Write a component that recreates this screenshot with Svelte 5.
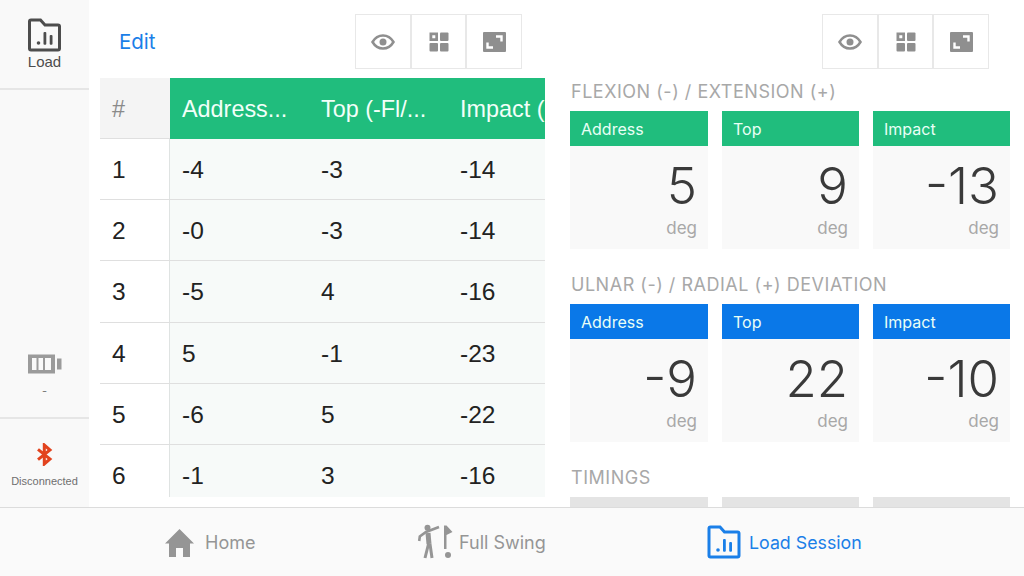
<script>
  const rows = [
    ['1', '-4', '-3', '-14'],
    ['2', '-0', '-3', '-14'],
    ['3', '-5', '4', '-16'],
    ['4', '5', '-1', '-23'],
    ['5', '-6', '5', '-22'],
    ['6', '-1', '3', '-16']
  ];
  const groups = [
    { title: 'FLEXION (-) / EXTENSION (+)', color: 'green', vals: ['5', '9', '-13'] },
    { title: 'ULNAR (-) / RADIAL (+) DEVIATION', color: 'blue', vals: ['-9', '22', '-10'] }
  ];
  const labels = ['Address', 'Top', 'Impact'];
</script>

{#snippet folder()}
  <path d="M2 3.500a1.500 1.500 0 0 1 1.500-1.500h9.500l4.500 5h13a1.500 1.500 0 0 1 1.500 1.500v22a1.500 1.500 0 0 1-1.500 1.500h-27a1.500 1.500 0 0 1-1.500-1.500z" fill="none" stroke="currentColor" stroke-width="3"/>
  <circle cx="11" cy="25" r="1.800" fill="currentColor"/>
  <rect x="16" y="14" width="2.800" height="12.800" rx="1" fill="currentColor"/>
  <rect x="22.200" y="17" width="2.800" height="9.800" rx="1" fill="currentColor"/>
{/snippet}

{#snippet toolbar()}
  <div class="toolbar">
    <button aria-label="View">
      <svg width="24" height="16" viewBox="0 0 24 16"><path d="M1.500 8C4 3.800 7.800 1.500 12 1.500S20 3.800 22.500 8C20 12.200 16.200 14.500 12 14.500S4 12.200 1.500 8z" fill="none" stroke="#8f8f8f" stroke-width="2.500"/><circle cx="12" cy="8" r="3.500" fill="#8f8f8f"/></svg>
    </button>
    <button aria-label="Grid">
      <svg width="20" height="20" viewBox="0 0 20 20"><path fill="#8f8f8f" fill-rule="evenodd" d="M0.500 0.500h8.500v8.500h-8.500zM3.300 3.300v3h3v-3z"/><rect x="11" y="0.500" width="8.500" height="8.500" rx="1" fill="#8f8f8f"/><rect x="0.500" y="11" width="8.500" height="8.500" rx="1" fill="#8f8f8f"/><rect x="11" y="11" width="8.500" height="8.500" rx="1" fill="#8f8f8f"/></svg>
    </button>
    <button aria-label="Expand">
      <svg width="23" height="20" viewBox="0 0 23 20"><rect width="23" height="20" rx="1" fill="#8f8f8f"/><path d="M13 4.500h5.500v5M10 15.500H4.500v-5" fill="none" stroke="#fff" stroke-width="2.400"/></svg>
    </button>
  </div>
{/snippet}

<div class="app">
  <div class="main">
    <aside>
      <div class="side load">
        <svg class="folder" width="36" height="35" viewBox="0 0 35 35">{@render folder()}</svg>
        <span>Load</span>
      </div>
      <div class="side battery">
        <svg width="34" height="20" viewBox="0 0 34 20">
          <path fill="#9b9b9b" fill-rule="evenodd" d="M0 0.500h27v19H0zM4 4v12h4.500V4zM10.500 4v12h4.500V4zM17 4v12h6V4z"/>
          <rect x="29" y="4.500" width="4.500" height="11" fill="#9b9b9b"/>
        </svg>
        <span class="dash">-</span>
      </div>
      <div class="side bt">
        <svg width="17" height="23" viewBox="0 0 17 23"><path d="M2 6.300 14 16 8.300 21V2L14 7 2 16.700" fill="none" stroke="#e2431e" stroke-width="3"/></svg>
        <span>Disconnected</span>
      </div>
    </aside>

    <section class="left">
      <div class="top">
        <span class="edit">Edit</span>
        {@render toolbar()}
      </div>
      <div class="table">
        <div class="row head">
          <div class="idx">#</div>
          <div class="c1">Address...</div>
          <div class="c2">Top (-Fl/...</div>
          <div class="c3">Impact (-Fl/...</div>
        </div>
        {#each rows as r}
          <div class="row">
            <div class="idx">{r[0]}</div>
            <div class="c1">{r[1]}</div>
            <div class="c2">{r[2]}</div>
            <div class="c3">{r[3]}</div>
          </div>
        {/each}
      </div>
    </section>

    <section class="right">
      <div class="top right-top">{@render toolbar()}</div>
      <div class="scroll">
        {#each groups as g}
          <h3>{g.title}</h3>
          <div class="cards">
            {#each labels as l, i}
              <div class="card">
                <div class="card-head {g.color}">{l}</div>
                <div class="card-body">
                  <div class="val">{g.vals[i]}</div>
                  <div class="unit">deg</div>
                </div>
              </div>
            {/each}
          </div>
        {/each}
        <h3>TIMINGS</h3>
        <div class="cards">
          {#each labels as l}
            <div class="card"><div class="card-head grey"></div></div>
          {/each}
        </div>
      </div>
    </section>
  </div>

  <nav>
    <div class="tab home">
      <svg width="29" height="29" viewBox="0 0 29 29"><path fill="#959595" d="M14.500 1 29 15.500h-4V29h-7v-9h-7v9H4V15.500H0z"/></svg>
      <span>Home</span>
    </div>
    <div class="tab swing">
      <svg width="36" height="36" viewBox="0 0 36 36">
        <circle cx="10.500" cy="3.800" r="3" fill="#959595"/>
        <path d="M2.200 17 2.800 12.500 9 8 22 3" fill="none" stroke="#959595" stroke-width="2.600"/>
        <path d="M11 9 12 20" fill="none" stroke="#959595" stroke-width="5"/>
        <path d="M11.500 20 8 34M13 20 15 34" fill="none" stroke="#959595" stroke-width="3"/>
        <path fill="#959595" d="M27 1.500h2.500l6 6.500-6 3V25H27z"/>
        <circle cx="31" cy="31" r="3" fill="#959595"/>
      </svg>
      <span>Full Swing</span>
    </div>
    <div class="tab active">
      <svg width="35" height="35" viewBox="0 0 35 35">{@render folder()}</svg>
      <span>Load Session</span>
    </div>
  </nav>
</div>

<style>
  :global(body) {
    margin: 0;
    background: #fff;
  }
  .app {
    width: 1024px;
    height: 576px;
    display: flex;
    flex-direction: column;
    overflow: hidden;
    font-family: Inter, "Liberation Sans", sans-serif;
  }
  .main {
    height: 507px;
    display: flex;
    overflow: hidden;
  }
  aside {
    width: 89px;
    flex: none;
    background: #f9f9f9;
    display: flex;
    flex-direction: column;
  }
  .side {
    display: flex;
    flex-direction: column;
    align-items: center;
    box-sizing: border-box;
  }
  .load {
    height: 90px;
    padding-top: 18px;
    border-bottom: 2px solid #e6e6e6;
    color: #4d4d4d;
    font-size: 15px;
  }
  .load span {
    line-height: 17px;
    margin-top: 0;
    font-family: "Liberation Sans", sans-serif;
  }
  .battery {
    flex: 1;
    justify-content: flex-end;
    padding-bottom: 19px;
    border-bottom: 2px solid #e6e6e6;
    color: #777;
  }
  .dash {
    font-size: 11px;
    line-height: 14px;
    margin-top: 10px;
  }
  .bt {
    height: 88px;
    padding-top: 24px;
    color: #6f6f6f;
    font-size: 11px;
    font-family: "Liberation Sans", sans-serif;
  }
  .bt span {
    margin-top: 8px;
    line-height: 14px;
  }
  .left {
    width: 457px;
    flex: none;
    padding-left: 11px;
    box-sizing: border-box;
  }
  .top {
    height: 78px;
    box-sizing: border-box;
    padding-top: 14px;
    display: flex;
  }
  .edit {
    width: 255px;
    padding-left: 19px;
    box-sizing: border-box;
    font-size: 20.500px;
    line-height: 56px;
    color: #1a7fe8;
  }
  .toolbar {
    display: flex;
    height: 55px;
    width: 167px;
    border: 1px solid #e8e8e8;
    box-sizing: border-box;
  }
  .toolbar button {
    flex: 1;
    padding: 0;
    border: 0;
    border-right: 2px solid #e8e8e8;
    background: #fff;
    display: flex;
    align-items: center;
    justify-content: center;
  }
  .toolbar button:last-child {
    border-right: 0;
  }
  .table {
    width: 445px;
    height: 419px;
    overflow: hidden;
    background: #f7faf9;
  }
  .row {
    display: flex;
    height: 61.200px;
    box-sizing: border-box;
    border-bottom: 1px solid #dfdfdf;
    font-family: "Liberation Sans", sans-serif;
    font-size: 24.500px;
    line-height: 62px;
    color: #222;
    white-space: nowrap;
  }
  .idx {
    width: 70px;
    flex: none;
    padding-left: 12px;
    box-sizing: border-box;
    background: #fff;
    border-right: 1px solid #dfe3e2;
  }
  .row > div {
    overflow: hidden;
  }
  .c1, .c2, .c3 {
    padding-left: 12px;
    box-sizing: border-box;
  }
  .c1 { width: 139px; }
  .c2 { width: 139px; }
  .c3 { flex: 1; }
  .head {
    height: 61px;
    background: #20bd7d;
    color: #f2fff9;
    border-bottom: 0;
    font-size: 23.400px;
  }
  .head .idx {
    background: #f4f4f4;
    color: #8a8a8a;
    border-right: 0;
    border-bottom: 1px solid #dfdfdf;
  }
  .right {
    flex: 1;
    padding-left: 24px;
    padding-right: 14px;
  }
  .right-top {
    padding-left: 252px;
  }
  .scroll {
    width: 440px;
  }
  h3 {
    margin: 0;
    height: 33px;
    padding-left: 1px;
    font-size: 18px;
    letter-spacing: 0.520px;
    font-weight: 400;
    line-height: 27px;
    color: #a8a8a8;
    white-space: nowrap;
  }
  .cards {
    display: grid;
    grid-template-columns: 138px 137px 137px;
    gap: 14px;
    margin-bottom: 22px;
  }
  .card-head {
    height: 35px;
    box-sizing: border-box;
    padding-left: 11px;
    font-size: 16px;
    line-height: 36px;
    color: #e9fff6;
  }
  .green { background: #20bd7d; }
  .blue { background: #0a78e8; }
  .grey { background: #e4e4e4; }
  .card-body {
    height: 103px;
    box-sizing: border-box;
    background: #f9f9f9;
    text-align: right;
    padding-right: 11px;
  }
  .val {
    font-size: 51px;
    line-height: 60px;
    padding-top: 10px;
    color: #3a3a3a;
    font-weight: 300;
  }
  .unit {
    font-size: 17px;
    line-height: 24px;
    color: #a8a8a8;
  }
  nav {
    height: 69px;
    flex: none;
    border-top: 1px solid #dcdcdc;
    box-sizing: border-box;
    background: #fafafa;
    display: flex;
  }
  .tab {
    display: flex;
    align-items: center;
    font-size: 18px;
    color: #959595;
  }
  .home {
    padding-left: 165px;
    width: 417px;
    box-sizing: border-box;
    gap: 11px;
  }
  .swing {
    width: 290px;
    gap: 6px;
  }
  .active {
    color: #1a7fe8;
    gap: 7px;
    font-size: 17.800px;
  }
</style>
